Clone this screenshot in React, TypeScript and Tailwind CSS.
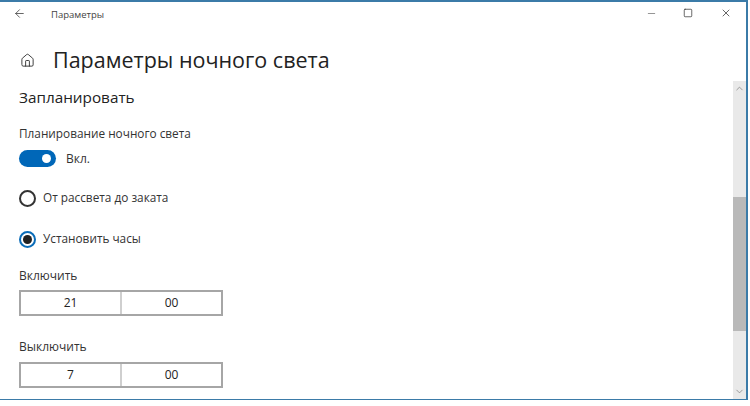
import React from 'react';
import { ArrowLeft, Minus, Square, X, Home, ChevronUp, ChevronDown } from 'lucide-react';

const FONT = { fontFamily: '"Open Sans", "Noto Sans", sans-serif' };

const TimePicker = ({ hour, minute }: { hour: string; minute: string }) => (
  <div className="flex w-[204px] h-[26px] border-2 border-[#a6a6a6] text-[12px] text-[#222]">
    <div className="flex-1 flex items-center justify-center border-r-2 border-[#cfcfcf]">{hour}</div>
    <div className="flex-1 flex items-center justify-center">{minute}</div>
  </div>
);

const Radio = ({ label, checked }: { label: string; checked?: boolean }) => (
  <div className="flex items-center gap-[7px] h-5">
    <div className={`w-[17px] h-[17px] rounded-full border-2 flex items-center justify-center ${checked ? 'border-[#0a6cb8]' : 'border-[#333]'}`}>
      {checked && <div className="w-[9px] h-[9px] rounded-full bg-[#222]" />}
    </div>
    <span className="text-[11.8px] text-[#333]">{label}</span>
  </div>
);

export default function App() {
  return (
    <div className="w-[750px] h-[406px] bg-white overflow-hidden" style={FONT}>
      <div className="w-[748px] h-[400px] flex flex-col border-t-2 border-r-2 border-b border-[#3b7ba8]">
        {/* Title bar */}
        <div className="flex items-center h-[26px] shrink-0">
          <ArrowLeft className="w-[13px] h-[13px] ml-[13px] mb-[4px] text-[#444]" strokeWidth={1.5} />
          <span className="ml-[25px] text-[9.5px] text-[#444]">Параметры</span>
          <div className="ml-auto flex items-center mb-[4px]">
            <Minus className="w-[11px] h-[11px] text-[#666] mr-[26px]" strokeWidth={1.5} />
            <Square className="w-[10px] h-[10px] text-[#333] mr-[27px]" strokeWidth={1.75} />
            <X className="w-[12px] h-[12px] text-[#333] mr-[14px]" strokeWidth={1.5} />
          </div>
        </div>

        <div className="flex flex-1 min-h-0">
          {/* Content */}
          <div className="flex-1 flex flex-col pl-[19px] overflow-hidden">
            <div className="flex items-center h-[32px] mt-[16px]">
              <Home className="w-[15px] h-[15px] ml-[1px] text-[#333]" strokeWidth={1.5} />
              <span className="ml-[18px] text-[21.5px] leading-none text-[#222]">Параметры ночного света</span>
            </div>
            <div className="mt-[11px] text-[15.3px] leading-5 text-[#222]">Запланировать</div>
            <div className="mt-[18px] text-[11.8px] leading-4 text-[#333]">Планирование ночного света</div>
            <div className="flex items-center mt-[9px] h-[17px]">
              <div className="w-[37px] h-[17px] rounded-full bg-[#0067b8] flex items-center justify-end pr-[5px]">
                <div className="w-[9px] h-[9px] rounded-full bg-white" />
              </div>
              <span className="ml-[10px] text-[12px] text-[#333]">Вкл.</span>
            </div>
            <div className="mt-[21px]"><Radio label="От рассвета до заката" /></div>
            <div className="mt-[21px]"><Radio label="Установить часы" checked /></div>
            <div className="mt-[19px] text-[12px] leading-4 text-[#333]">Включить</div>
            <div className="mt-[6px]"><TimePicker hour="21" minute="00" /></div>
            <div className="mt-[23px] text-[12px] leading-4 text-[#333]">Выключить</div>
            <div className="mt-[7px]"><TimePicker hour="7" minute="00" /></div>
          </div>

          {/* Scrollbar */}
          <div className="w-[13px] mt-[53px] bg-[#e9e9e9] flex flex-col items-center shrink-0">
            <ChevronUp className="w-[11px] h-[11px] mt-[2px] text-[#777]" strokeWidth={1.5} />
            <div className="w-full h-[134px] mt-[103px] bg-[#b9b9b9]" />
            <ChevronDown className="w-[11px] h-[11px] mt-auto mb-[2px] text-[#777]" strokeWidth={1.5} />
          </div>
        </div>
      </div>
    </div>
  );
}
